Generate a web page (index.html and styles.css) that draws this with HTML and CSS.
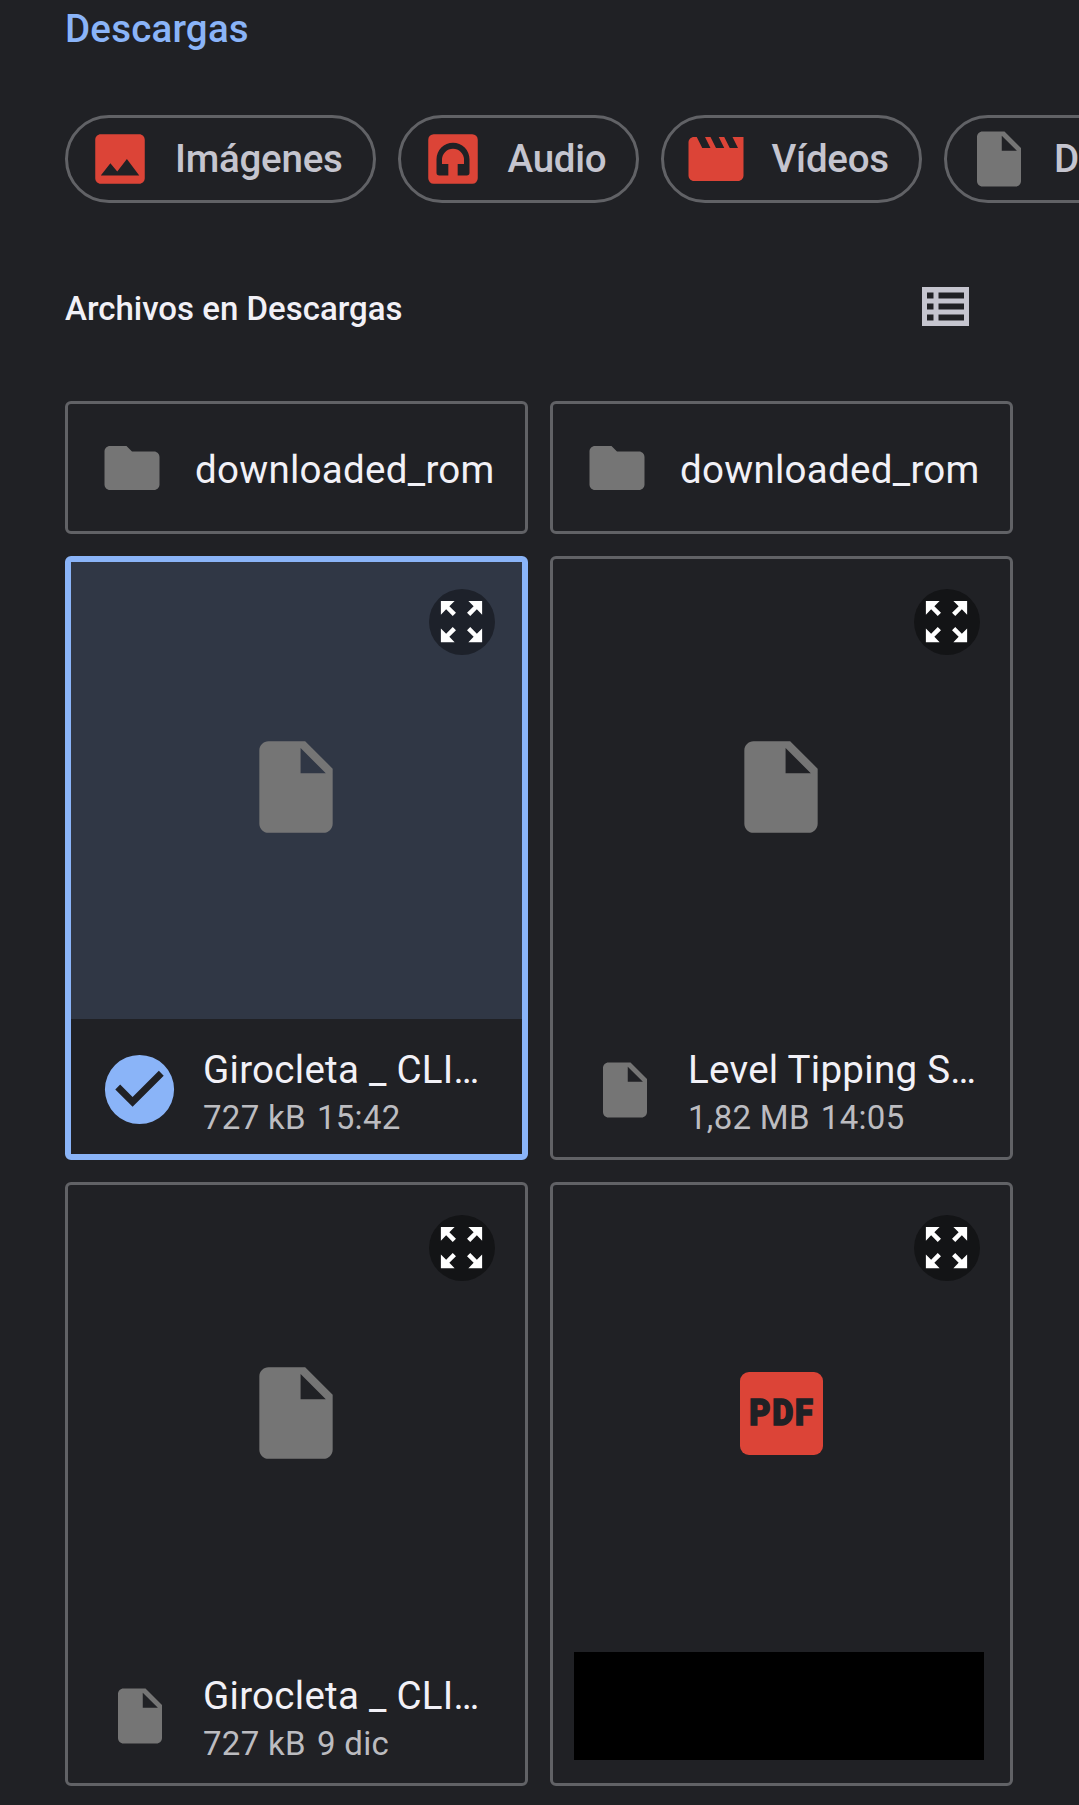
FILE: index.html
```html
<!DOCTYPE html>
<html lang="es">
<head>
<meta charset="utf-8">
<title>Descargas</title>
<link rel="stylesheet" href="styles.css">
</head>
<body>
<svg class="sprite" aria-hidden="true">
  <symbol id="file" viewBox="0 0 24 24"><path d="M14 2H6c-1.1 0-2 .9-2 2v16c0 1.1.9 2 2 2h12c1.1 0 2-.9 2-2V8l-6-6zm-1 7V3.5L18.5 9H13z"/></symbol>
  <symbol id="folder" viewBox="0 0 24 24"><path d="M10 4H4c-1.1 0-2 .9-2 2v12c0 1.1.9 2 2 2h16c1.1 0 2-.9 2-2V8c0-1.1-.9-2-2-2h-8l-2-2z"/></symbol>
  <symbol id="expand" viewBox="0 0 24 24"><path d="M15 3l2.3 2.3-2.89 2.87 1.42 1.42L18.7 6.7 21 9V3h-6zM3 9l2.3-2.3 2.87 2.89 1.42-1.42L6.7 5.3 9 3H3v6zm6 12l-2.3-2.3 2.89-2.87-1.42-1.42L5.3 17.3 3 15v6h6zm12-6l-2.3 2.3-2.87-2.89-1.42 1.42 2.89 2.87L15 21h6v-6z"/></symbol>
</svg>

<nav class="breadcrumb">Descargas</nav>

<div class="chips">
  <button class="chip">
    <svg class="icon red" viewBox="0 0 24 24"><path d="M21 19V5c0-1.1-.9-2-2-2H5c-1.1 0-2 .9-2 2v14c0 1.1.9 2 2 2h14c1.1 0 2-.9 2-2zM8.5 13.5l2.5 3.01L14.5 12l4.5 6H5l3.5-4.5z"/></svg>
    <span>Imágenes</span>
  </button>
  <button class="chip">
    <svg class="icon red" viewBox="0 0 24 24"><path fill-rule="evenodd" d="M5 3h14a2 2 0 0 1 2 2v14a2 2 0 0 1-2 2H5a2 2 0 0 1-2-2V5a2 2 0 0 1 2-2zM12 6.1a6 6 0 0 0-6 6V17a1 1 0 0 0 1 1h3.3v-4.2H8v-1.5a4 4 0 0 1 8 0v1.5h-2.3V18H17a1 1 0 0 0 1-1v-4.9a6 6 0 0 0-6-6z"/></svg>
    <span>Audio</span>
  </button>
  <button class="chip">
    <svg class="icon red" viewBox="0 0 24 24"><path d="M18 4l2 4h-3l-2-4h-2l2 4h-3l-2-4H8l2 4H7L5 4H4c-1.1 0-2 .9-2 2v12c0 1.1.9 2 2 2h16c1.1 0 2-.9 2-2V4h-4z"/></svg>
    <span>Vídeos</span>
  </button>
  <button class="chip">
    <svg class="icon gray"><use href="#file"/></svg>
    <span>Documentos</span>
  </button>
</div>

<header class="section-head">
  <h1>Archivos en Descargas</h1>
  <svg class="list-icon" viewBox="0 0 47 39"><path fill-rule="evenodd" d="M0 0h47v39H0zM5 5.5h6.5v6H5zM16.5 5.5H42v6H16.5zM5 16.5h6.5v6H5zM16.5 16.5H42v6H16.5zM5 27.5h6.5v6H5zM16.5 27.5H42v6H16.5z"/></svg>
</header>

<main class="grid">
  <article class="folder">
    <svg class="icon gray"><use href="#folder"/></svg>
    <span class="name">downloaded_rom</span>
  </article>
  <article class="folder">
    <svg class="icon gray"><use href="#folder"/></svg>
    <span class="name">downloaded_rom</span>
  </article>

  <article class="card selected">
    <div class="preview">
      <svg class="thumb gray"><use href="#file"/></svg>
      <div class="expand"><svg><use href="#expand"/></svg></div>
    </div>
    <div class="info">
      <div class="badge"><svg class="check" viewBox="0 0 24 24"><path d="M12 2a10 10 0 1 0 0 20 10 10 0 0 0 0-20zm-2 15l-5-5 1.41-1.41L10 14.17l7.59-7.59L19 8l-9 9z"/></svg></div>
      <div class="text">
        <div class="name">Girocleta _ CLI…</div>
        <div class="meta"><span>727 kB</span><span>15:42</span></div>
      </div>
    </div>
  </article>

  <article class="card">
    <div class="preview">
      <svg class="thumb gray"><use href="#file"/></svg>
      <div class="expand"><svg><use href="#expand"/></svg></div>
    </div>
    <div class="info">
      <div class="badge"><svg class="icon gray"><use href="#file"/></svg></div>
      <div class="text">
        <div class="name">Level Tipping S…</div>
        <div class="meta"><span>1,82 MB</span><span>14:05</span></div>
      </div>
    </div>
  </article>

  <article class="card">
    <div class="preview">
      <svg class="thumb gray"><use href="#file"/></svg>
      <div class="expand"><svg><use href="#expand"/></svg></div>
    </div>
    <div class="info">
      <div class="badge"><svg class="icon gray"><use href="#file"/></svg></div>
      <div class="text">
        <div class="name">Girocleta _ CLI…</div>
        <div class="meta"><span>727 kB</span><span>9 dic</span></div>
      </div>
    </div>
  </article>

  <article class="card">
    <div class="preview">
      <div class="pdf"><span>PDF</span></div>
      <div class="expand"><svg><use href="#expand"/></svg></div>
    </div>
    <div class="redacted"></div>
  </article>
</main>
</body>
</html>
```
FILE: styles.css
```css
* { box-sizing: border-box; }

body {
  margin: 0;
  height: 1805px;
  overflow: hidden;
  background: #202125;
  color: #f2f1f7;
  font-family: Roboto, sans-serif;
}

.sprite { display: none; }
svg { display: block; flex: none; fill: currentColor; }

.icon { width: 66px; height: 66px; }
.red { color: #dc4437; }
.gray { color: #757575; }

.breadcrumb {
  height: 115px;
  padding: 6px 0 0 65px;
  color: #8ab4f8;
  font-size: 38.5px;
  font-weight: 500;
  line-height: 45px;
  letter-spacing: 0.2px;
}

.chips {
  display: flex;
  gap: 22px;
  padding-left: 65px;
  overflow: hidden;
}

.chip {
  display: flex;
  flex: none;
  align-items: center;
  gap: 22px;
  height: 88px;
  padding: 0 30px 0 19px;
  border: 3px solid #616266;
  border-radius: 44px;
  background: none;
  color: #c5c5cf;
  font: 500 38.5px/45px Roboto, sans-serif;
  letter-spacing: -0.24px;
}

.chip span { padding-bottom: 2px; }

.section-head {
  display: flex;
  align-items: center;
  justify-content: space-between;
  height: 198px;
  padding: 12px 110px 0 65px;
}

.section-head h1 {
  margin: 0;
  font-size: 33px;
  font-weight: 500;
  line-height: 39px;
}

.list-icon {
  width: 47px;
  height: 39px;
  margin-bottom: 3px;
  color: #c5c5cf;
}

.grid {
  display: grid;
  grid-template-columns: 463px 463px;
  grid-template-rows: 133px 604px 604px;
  gap: 22px;
  padding-left: 65px;
}

.folder,
.card {
  border: 3px solid #616266;
  border-radius: 6px;
}

.folder {
  display: flex;
  align-items: center;
  gap: 30px;
  padding-left: 31px;
}

.folder .name { padding-top: 3px; }

.name {
  font-size: 38.5px;
  line-height: 45px;
  letter-spacing: 0.28px;
  white-space: nowrap;
}

.card {
  display: flex;
  flex-direction: column;
  overflow: hidden;
}

.preview {
  position: relative;
  display: flex;
  flex: none;
  align-items: center;
  justify-content: center;
  height: 460px;
  padding: 0 2px 4px 0;
}

.thumb { width: 110px; height: 110px; }

.expand {
  position: absolute;
  top: 30px;
  right: 30px;
  display: grid;
  place-items: center;
  width: 66px;
  height: 66px;
  border-radius: 50%;
  background: #131416;
  color: #fff;
}

.expand svg { width: 56px; height: 56px; padding: 0 1px 1px 0; }

.info {
  display: flex;
  flex: 1;
  align-items: center;
  padding: 4px 0 0 30px;
}

.badge {
  display: grid;
  place-items: center;
  width: 84px;
}

.text {
  margin-left: 21px;
  padding-top: 4px;
}

.meta {
  display: flex;
  gap: 11px;
  color: #bcbcc0;
  font-size: 33px;
  line-height: 39px;
  margin-top: 6px;
  letter-spacing: 0.3px;
}

.selected {
  border: 6px solid #8ab4f8;
}

.selected .preview { height: 457px; padding-bottom: 7px; background: #303745; }
.selected .expand { top: 27px; right: 27px; background: #1d212a; }
.selected .info { padding: 6px 0 0 26px; }
.selected .text { margin-left: 22px; }

.check { width: 83px; height: 83px; color: #8ab4f8; }

.pdf {
  display: grid;
  place-items: center;
  width: 83px;
  height: 83px;
  margin-left: 1px;
  border-radius: 9px;
  background: #dc4437;
  color: #202125;
}

.pdf span {
  padding-left: 3px;
  font-size: 37px;
  font-weight: 900;
  line-height: 38px;
  letter-spacing: 2px;
  transform: scaleX(0.88);
  -webkit-text-stroke: 1.6px #202125;
}

.redacted {
  width: 410px;
  height: 108px;
  margin: 7px 0 0 21px;
  background: #000;
}
```
